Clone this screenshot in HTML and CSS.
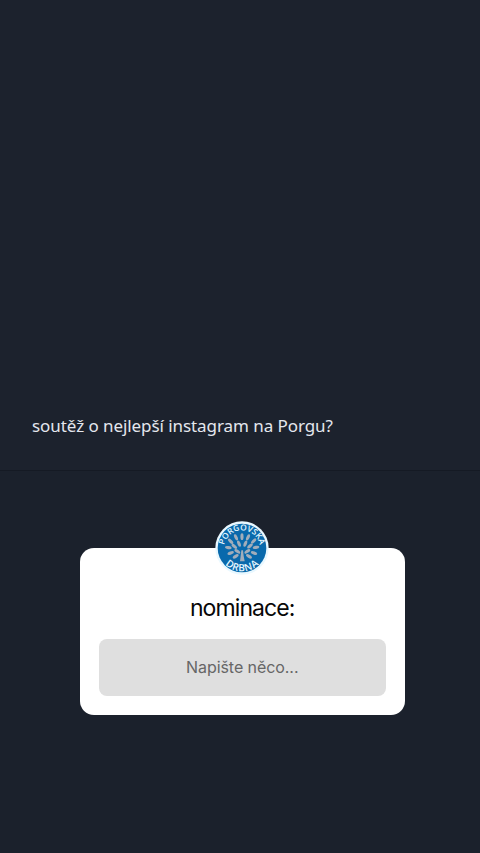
FILE: index.html
```html
<!DOCTYPE html>
<html lang="cs">
<head>
<meta charset="utf-8">
<title>Porgovská drbna</title>
<link rel="stylesheet" href="styles.css">
</head>
<body>
<main class="story">
  <header class="caption"><p class="caption-text">soutěž o nejlepší instagram na Porgu?</p></header>
  <section class="card">
    <svg class="avatar" viewBox="0 0 162 162" aria-hidden="true">
      <defs>
        <path id="top-arc" d="M27 82a54 54 0 0 1 108 0"/>
        <path id="bottom-arc" d="M9 79a72 72 0 0 0 144 0"/>
        <ellipse id="leaf" rx="4.7" ry="10"/>
      </defs>
      <circle cx="81" cy="81" r="80" fill="#e9f8ff"/>
      <circle cx="81" cy="81" r="73" fill="#0969ac"/>
      <g fill="#a2adba">
        <path d="M75 121L77 105 79 88H84L86 105 89 121Z"/>
        <use href="#leaf" transform="translate(81 47)"/>
        <use href="#leaf" transform="translate(63 49) rotate(-25)"/>
        <use href="#leaf" transform="translate(99 49) rotate(25)"/>
        <use href="#leaf" transform="translate(47 61) rotate(-45)"/>
        <use href="#leaf" transform="translate(116 60) rotate(45)"/>
        <use href="#leaf" transform="translate(72 68) rotate(-22)"/>
        <use href="#leaf" transform="translate(91 68) rotate(22)"/>
        <use href="#leaf" transform="translate(58 76) rotate(-50)"/>
        <use href="#leaf" transform="translate(105 75) rotate(50)"/>
        <use href="#leaf" transform="translate(40 80) rotate(-80)"/>
        <use href="#leaf" transform="translate(123 79) rotate(80)"/>
        <use href="#leaf" transform="translate(47 96) rotate(-110)"/>
        <use href="#leaf" transform="translate(117 96) rotate(110)"/>
        <use href="#leaf" transform="translate(67 91) rotate(-55)"/>
        <use href="#leaf" transform="translate(97 91) rotate(55)"/>
        <use href="#leaf" transform="translate(62 106) rotate(58)"/>
        <use href="#leaf" transform="translate(102 106) rotate(-58)"/>
      </g>
      <text class="badge-text"><textPath href="#top-arc" startOffset="50%" textLength="150">PORGOVSKA</textPath></text>
      <text class="badge-text badge-bottom"><textPath href="#bottom-arc" startOffset="50%" textLength="112">DRBNA</textPath></text>
    </svg>
    <h1 class="title">nominace:</h1>
    <div class="answer">Napište něco...</div>
  </section>
</main>
</body>
</html>
```
FILE: styles.css
```css
* { box-sizing: border-box; }
body { margin: 0; background: #1b212c; }
.story { height: 853px; display: flex; flex-direction: column; }
.caption {
  height: 471px;
  padding: 0 32px 32px;
  display: flex;
  align-items: flex-end;
  background: #1c222d;
  border-bottom: 1px solid #151a24;
}
.caption-text {
  margin: 0;
  font: 17px/24px "Noto Sans", sans-serif;
  letter-spacing: -0.07px;
  color: #e4e7ee;
  white-space: nowrap;
}
.card {
  width: 324.5px;
  height: 167px;
  margin: 76.5px 0 0 80px;
  padding: 0 18.5px 18.5px;
  border-radius: 14px;
  background: #fff;
  display: flex;
  flex-direction: column;
  align-items: center;
}
.avatar { width: 54px; height: 54px; margin-top: -27px; flex: none; overflow: visible; }
.badge-text {
  font: 600 25px "Open Sans", sans-serif;
  fill: #e6f7ff;
  text-anchor: middle;
}
.badge-bottom { font-size: 30px; }
.title {
  margin: 17px 0 0;
  font: 400 23px/32px Inter, sans-serif;
  letter-spacing: -0.9px;
  color: #080808;
}
.answer {
  width: 287.5px;
  height: 57px;
  margin-top: auto;
  border-radius: 8px;
  background: #dfdfdf;
  color: #666;
  font: 16px/57px Inter, sans-serif;
  letter-spacing: -0.07px;
  text-align: center;
}
```
